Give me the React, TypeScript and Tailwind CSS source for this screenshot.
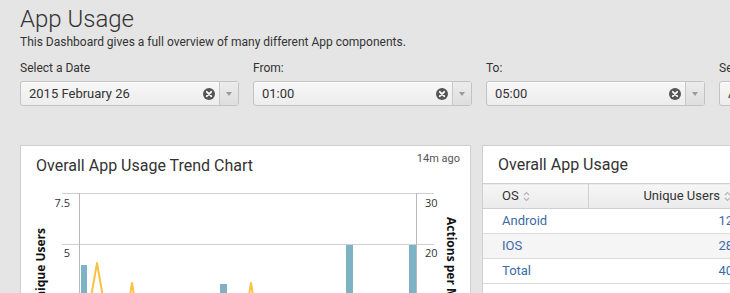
import React from "react";

const fields = [
  { label: "Select a Date", value: "2015 February 26" },
  { label: "From:", value: "01:00" },
  { label: "To:", value: "05:00" },
  { label: "Select App", value: "All" },
];

const rows = [
  { os: "Android", users: 12 },
  { os: "IOS", users: 28 },
  { os: "Total", users: 40 },
];

const ClearIcon = () => (
  <svg width="12" height="12" viewBox="0 0 12 12">
    <circle cx="6" cy="6" r="6" fill="#555" />
    <path d="M3.8 3.8 L8.2 8.2 M8.2 3.8 L3.8 8.2" stroke="#fff" strokeWidth="1.8" strokeLinecap="round" />
  </svg>
);

const SortIcon = () => (
  <svg width="7" height="11" viewBox="0 0 7 11" className="shrink-0">
    <path d="M1 4 L3.5 1.5 L6 4 M1 7 L3.5 9.5 L6 7" fill="none" stroke="#b5b5b5" strokeWidth="1.2" />
  </svg>
);

const Field = ({ label, value }: { label: string; value: string }) => (
  <div className="w-[219px] shrink-0">
    <div className="text-[12px] leading-[14px] text-[#333]">{label}</div>
    <div className="mt-[6px] flex h-[25px] rounded-[3px] border border-[#c3c3c3] bg-gradient-to-b from-[#f7f7f7] to-[#ededed] shadow-[inset_0_1px_0_#fff]">
      <div className="flex flex-1 items-center pl-[8px] pr-[4px] text-[13px] text-[#333]">
        <span className="flex-1">{value}</span>
        <ClearIcon />
      </div>
      <div className="flex w-[19px] items-center justify-center border-l border-[#c8c8c8] bg-gradient-to-b from-[#ececec] to-[#dedede]">
        <svg width="6" height="4" viewBox="0 0 6 4">
          <path d="M0 0 L6 0 L3 4 Z" fill="#9a9a9a" />
        </svg>
      </div>
    </div>
  </div>
);

const TrendChart = () => (
  <svg width="449" height="107" className="block">
    {/* grid */}
    <line x1="41" y1="7.5" x2="413" y2="7.5" stroke="#d0d0d0" />
    <line x1="41" y1="58.5" x2="413" y2="58.5" stroke="#d0d0d0" />
    <line x1="58.5" y1="7" x2="58.5" y2="120" stroke="#b8b8b8" />
    <line x1="395.5" y1="7" x2="395.5" y2="120" stroke="#b8b8b8" />
    {/* axis labels */}
    <g fontFamily="'Open Sans', sans-serif" fontSize="11" fill="#333">
      <text x="49" y="21" textAnchor="end">7.5</text>
      <text x="49" y="71" textAnchor="end">5</text>
      <text x="404" y="21">30</text>
      <text x="404" y="71">20</text>
    </g>
    <g fontFamily="'Open Sans', sans-serif" fontSize="12" fontWeight="700" fill="#111">
      <text transform="translate(23.5 42) rotate(-90)" textAnchor="end">Unique Users</text>
      <text transform="translate(426 31) rotate(90)">Actions per Minute</text>
    </g>
    {/* bars */}
    <g fill="#7eb3c5">
      <rect x="60" y="79" width="6" height="60" />
      <rect x="199" y="98" width="7" height="40" />
      <rect x="325" y="59" width="7" height="80" />
      <rect x="388" y="59" width="7" height="80" />
    </g>
    {/* line */}
    <polyline
      points="58,140 65,140 76,77 87,140 104,140 111,97 118,140 223,140 230,97 237,140 300,140"
      fill="none"
      stroke="#f5c33f"
      strokeWidth="2"
      strokeLinejoin="round"
    />
  </svg>
);

export default function App() {
  return (
    <div className="h-[293px] w-[730px] overflow-hidden bg-[#e5e5e5] font-['Roboto',sans-serif] text-[#333]">
      <div className="pl-5 pt-[5px]">
        <h1 className="text-[24px] font-light leading-[28px] text-[#333]">App Usage</h1>
        <p className="mt-[2px] text-[12px] leading-[14px]">
          This Dashboard gives a full overview of many different App components.
        </p>
      </div>

      <div className="mt-[12px] flex gap-[14px] pl-5">
        {fields.map((f) => (
          <Field key={f.label} label={f.label} value={f.value} />
        ))}
      </div>

      <div className="mt-[39px] flex gap-[11px] pl-5">
        <div className="h-[200px] w-[451px] shrink-0 overflow-hidden border border-[#cfcfcf] bg-white">
          <div className="flex h-[40px] justify-between pl-[15px] pr-[10px]">
            <div className="pt-[10px] text-[16px] leading-[20px] text-[#333]">Overall App Usage Trend Chart</div>
            <div className="pt-[6px] text-[11px] leading-[13px] text-[#555]">14m ago</div>
          </div>
          <TrendChart />
        </div>

        <div className="h-[200px] w-[262px] shrink-0 border border-[#cfcfcf] bg-white">
          <div className="h-[37px] pl-[15px] pt-[9px] text-[16px] leading-[20px] text-[#333]">Overall App Usage</div>
          <table className="w-full border-collapse text-[13px]">
            <thead>
              <tr className="h-[25px] border-y border-[#d0d0d0] bg-gradient-to-b from-[#f6f6f6] to-[#ebebeb]">
                <th className="w-[105px] border-r border-[#d0d0d0] pl-[19px] text-left font-normal">
                  <span className="inline-flex items-center gap-[4px]">
                    OS <SortIcon />
                  </span>
                </th>
                <th className="pr-[12px] text-right font-normal">
                  <span className="inline-flex items-center gap-[4px]">
                    Unique Users <SortIcon />
                  </span>
                </th>
              </tr>
            </thead>
            <tbody>
              {rows.map((r, i) => (
                <tr key={r.os} className={`h-[25px] border-b border-[#dcdcdc] ${i === 1 ? "bg-[#f5f5f5]" : "bg-white"}`}>
                  <td className="pl-[19px] text-[#3d6aa8]">{r.os}</td>
                  <td className="pr-[10px] text-right text-[#3d6aa8]">{r.users}</td>
                </tr>
              ))}
            </tbody>
          </table>
        </div>
      </div>
    </div>
  );
}
